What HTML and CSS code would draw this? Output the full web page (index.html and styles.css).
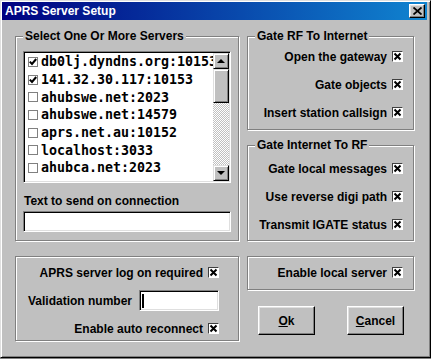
FILE: index.html
```html
<!DOCTYPE html>
<html lang="en">
<head>
  <meta charset="UTF-8" />
  <title>APRS Server Setup</title>
  <link rel="stylesheet" href="styles.css">
</head>
<body>

  <div class="window">
    <div class="titlebar">
      <span class="title">APRS Server Setup</span>
      <button class="close-btn" type="button">
        <svg width="9" height="8" viewBox="0 0 9 8"><path d="M0.5 0.5l8 7M8.5 0.5l-8 7" stroke="#000" stroke-width="1.8" fill="none"/></svg>
      </button>
    </div>

    <div class="content">
      <div class="col-left">
        <div class="group servers">
          <span class="group-title">Select One Or More Servers</span>
          <div class="listbox">
            <ul class="items">
              <li class="item"><span class="box checked"><svg width="8" height="8" viewBox="0 0 8 8"><path d="M0.8 3.6l2.2 2.4 4.2-5" stroke="#000" stroke-width="2" fill="none"/></svg></span>db0lj.dyndns.org:10153</li>
              <li class="item"><span class="box checked"><svg width="8" height="8" viewBox="0 0 8 8"><path d="M0.8 3.6l2.2 2.4 4.2-5" stroke="#000" stroke-width="2" fill="none"/></svg></span>141.32.30.117:10153</li>
              <li class="item"><span class="box"></span>ahubswe.net:2023</li>
              <li class="item"><span class="box"></span>ahubswe.net:14579</li>
              <li class="item"><span class="box"></span>aprs.net.au:10152</li>
              <li class="item"><span class="box"></span>localhost:3033</li>
              <li class="item"><span class="box"></span>ahubca.net:2023</li>
            </ul>
            <div class="scrollbar">
              <div class="sb-btn"><span class="arrow up"></span></div>
              <div class="sb-thumb"></div>
              <div class="sb-track"></div>
              <div class="sb-btn"><span class="arrow down"></span></div>
            </div>
          </div>
          <label class="field-label" for="connect-text">Text to send on connection</label>
          <input class="textbox wide" id="connect-text" type="text" />
        </div>

        <div class="group logon">
          <div class="opt"><span>APRS server log on required</span><span class="check"><svg width="9" height="9" viewBox="0 0 9 9"><path d="M1.5 1.5l6 6M7.5 1.5l-6 6" stroke="#000" stroke-width="2"/></svg></span></div>
          <div class="opt"><span class="val-label">Validation number</span><span class="textbox small"><span class="caret"></span></span></div>
          <div class="opt"><span>Enable auto reconnect</span><span class="check"><svg width="9" height="9" viewBox="0 0 9 9"><path d="M1.5 1.5l6 6M7.5 1.5l-6 6" stroke="#000" stroke-width="2"/></svg></span></div>
        </div>
      </div>

      <div class="col-right">
        <div class="group rf">
          <span class="group-title">Gate RF To Internet</span>
          <div class="opt"><span>Open the gateway</span><span class="check"><svg width="9" height="9" viewBox="0 0 9 9"><path d="M1.5 1.5l6 6M7.5 1.5l-6 6" stroke="#000" stroke-width="2"/></svg></span></div>
          <div class="opt"><span>Gate objects</span><span class="check"><svg width="9" height="9" viewBox="0 0 9 9"><path d="M1.5 1.5l6 6M7.5 1.5l-6 6" stroke="#000" stroke-width="2"/></svg></span></div>
          <div class="opt"><span>Insert station callsign</span><span class="check"><svg width="9" height="9" viewBox="0 0 9 9"><path d="M1.5 1.5l6 6M7.5 1.5l-6 6" stroke="#000" stroke-width="2"/></svg></span></div>
        </div>

        <div class="group inet">
          <span class="group-title">Gate Internet To RF</span>
          <div class="opt"><span>Gate local messages</span><span class="check"><svg width="9" height="9" viewBox="0 0 9 9"><path d="M1.5 1.5l6 6M7.5 1.5l-6 6" stroke="#000" stroke-width="2"/></svg></span></div>
          <div class="opt"><span>Use reverse digi path</span><span class="check"><svg width="9" height="9" viewBox="0 0 9 9"><path d="M1.5 1.5l6 6M7.5 1.5l-6 6" stroke="#000" stroke-width="2"/></svg></span></div>
          <div class="opt"><span>Transmit IGATE status</span><span class="check"><svg width="9" height="9" viewBox="0 0 9 9"><path d="M1.5 1.5l6 6M7.5 1.5l-6 6" stroke="#000" stroke-width="2"/></svg></span></div>
        </div>

        <div class="group local">
          <div class="opt"><span>Enable local server</span><span class="check"><svg width="9" height="9" viewBox="0 0 9 9"><path d="M1.5 1.5l6 6M7.5 1.5l-6 6" stroke="#000" stroke-width="2"/></svg></span></div>
        </div>

        <div class="buttons">
          <button class="btn" type="button"><u>O</u>k</button>
          <button class="btn" type="button"><u>C</u>ancel</button>
        </div>
      </div>
    </div>
  </div>

</body>
</html>
```

FILE: styles.css
```css
* {
  box-sizing: border-box;
}

body {
  margin: 0;
  background: #808080;
  font-family: 'Liberation Sans', Arial, sans-serif;
  font-size: 12px;
  font-weight: bold;
  color: #000;
}

.window {
  width: 431px;
  height: 358px;
  background: #c0c0c0;
  border: 1px solid;
  border-color: #dfdfdf #000 #000 #dfdfdf;
  box-shadow: inset 1px 1px 0 #fff, inset -1px -1px 0 #808080;
}

/* title bar */
.titlebar {
  height: 18px;
  margin: 1px 3px 0 1px;
  padding-left: 3px;
  display: flex;
  align-items: center;
  justify-content: space-between;
  background: linear-gradient(to right, #000080, #1084d0);
}

.title {
  color: #fff;
  font-size: 12px;
  line-height: 14px;
}

.close-btn {
  width: 16px;
  height: 14px;
  margin-right: 2px;
  padding: 0;
  display: flex;
  align-items: center;
  justify-content: center;
  background: #c0c0c0;
  border: 1px solid;
  border-color: #fff #000 #000 #fff;
  box-shadow: inset -1px -1px 0 #808080, inset 1px 1px 0 #dfdfdf;
}

/* layout */
.content {
  display: flex;
  gap: 8px;
  padding: 16px 0 0 14px;
}

.col-left {
  width: 224px;
  display: flex;
  flex-direction: column;
  gap: 15px;
}

.col-right {
  width: 167px;
  display: flex;
  flex-direction: column;
  gap: 15px;
}

/* etched group box */
.group {
  position: relative;
  border: 1px solid #808080;
  box-shadow: 1px 1px 0 #fff, inset 1px 1px 0 #fff;
}

.group-title {
  position: absolute;
  top: -8px;
  left: 7px;
  padding: 0 2px;
  line-height: 14px;
  background: #c0c0c0;
}

.servers {
  height: 205px;
  padding: 14px 7px 0;
  display: flex;
  flex-direction: column;
}

.logon {
  height: 85px;
  padding: 5px 19px 0 0;
}

.rf {
  height: 94px;
  padding: 9px 10px 0 0;
}

.inet {
  height: 96px;
  padding: 12px 10px 0 0;
}

.local {
  height: 34px;
  padding: 5px 10px 0 0;
}

.group .opt + .opt {
  margin-top: 7px;
}

.opt {
  height: 21px;
  display: flex;
  align-items: center;
  justify-content: flex-end;
  gap: 5px;
  white-space: nowrap;
}

.check {
  width: 11px;
  height: 11px;
  display: flex;
  align-items: center;
  justify-content: center;
  background: #fff;
  border: 1px solid;
  border-color: #404040 #fff #fff #404040;
}

.val-label {
  margin-right: 2px;
}

/* listbox */
.listbox {
  height: 132px;
  display: flex;
  background: #fff;
  border: 1px solid;
  border-color: #808080 #fff #fff #808080;
  box-shadow: inset 1px 1px 0 #000, inset -1px -1px 0 #dfdfdf;
  padding: 1px;
}

.items {
  flex: 1;
  min-width: 0;
  margin: 0;
  padding: 0;
  list-style: none;
  overflow: hidden;
  font-family: 'DejaVu Sans Mono', monospace;
  font-size: 13.3px;
}

.item {
  height: 17.7px;
  padding-left: 3px;
  display: flex;
  align-items: center;
  gap: 3px;
  white-space: nowrap;
}

.box {
  flex: none;
  width: 10px;
  height: 10px;
  display: flex;
  align-items: center;
  justify-content: center;
  border: 1px solid #808080;
  background: #fff;
}

.scrollbar {
  width: 16px;
  display: flex;
  flex-direction: column;
}

.sb-btn,
.sb-thumb {
  flex: none;
  background: #c0c0c0;
  border: 1px solid;
  border-color: #dfdfdf #000 #000 #dfdfdf;
  box-shadow: inset 1px 1px 0 #fff, inset -1px -1px 0 #808080;
}

.sb-btn {
  height: 16px;
  display: flex;
  align-items: center;
  justify-content: center;
}

.sb-thumb {
  height: 34px;
}

.sb-track {
  flex: 1;
  background: repeating-conic-gradient(#c0c0c0 0 25%, #fff 0 50%) 0 0 / 2px 2px;
}

.arrow {
  width: 0;
  height: 0;
  border-left: 4px solid transparent;
  border-right: 4px solid transparent;
}

.arrow.up {
  border-bottom: 4px solid #000;
}

.arrow.down {
  border-top: 4px solid #000;
}

/* text inputs */
.field-label {
  margin: 11px 0 0 1px;
  line-height: 14px;
}

.textbox {
  height: 21px;
  background: #fff;
  border: 1px solid;
  border-color: #808080 #fff #fff #808080;
  box-shadow: inset 1px 1px 0 #000, inset -1px -1px 0 #dfdfdf;
}

.wide {
  width: 208px;
  margin-top: 3px;
}

.small {
  width: 80px;
  display: flex;
  align-items: center;
  padding-left: 2px;
}

.caret {
  width: 2px;
  height: 14px;
  background: #000;
}

/* buttons */
.buttons {
  margin-top: 1px;
  display: flex;
  justify-content: center;
  gap: 32px;
  padding-left: 1px;
}

.btn {
  width: 57px;
  height: 29px;
  padding: 0;
  background: #c0c0c0;
  font-family: 'Liberation Sans', Arial, sans-serif;
  font-size: 12px;
  font-weight: bold;
  color: #000;
  border: 1px solid;
  border-color: #fff #000 #000 #fff;
  box-shadow: inset -1px -1px 0 #808080, inset 1px 1px 0 #dfdfdf;
}
```
